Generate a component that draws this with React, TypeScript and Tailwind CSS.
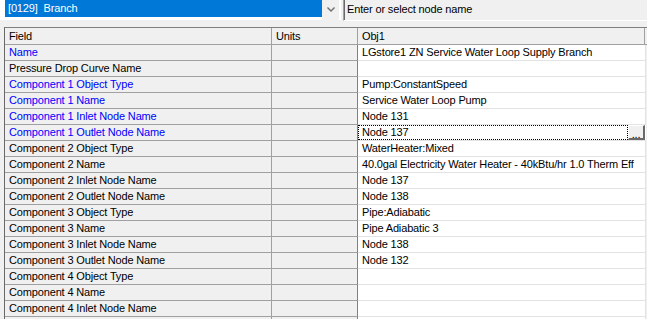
type Row = {
  field: string;
  value: string;
  blue?: boolean;
  focused?: boolean;
};

const rows: Row[] = [
  { field: "Name", value: "LGstore1 ZN Service Water Loop Supply Branch", blue: true },
  { field: "Pressure Drop Curve Name", value: "" },
  { field: "Component 1 Object Type", value: "Pump:ConstantSpeed", blue: true },
  { field: "Component 1 Name", value: "Service Water Loop Pump", blue: true },
  { field: "Component 1 Inlet Node Name", value: "Node 131", blue: true },
  { field: "Component 1 Outlet Node Name", value: "Node 137", blue: true, focused: true },
  { field: "Component 2 Object Type", value: "WaterHeater:Mixed" },
  { field: "Component 2 Name", value: "40.0gal Electricity Water Heater - 40kBtu/hr 1.0 Therm Eff" },
  { field: "Component 2 Inlet Node Name", value: "Node 137" },
  { field: "Component 2 Outlet Node Name", value: "Node 138" },
  { field: "Component 3 Object Type", value: "Pipe:Adiabatic" },
  { field: "Component 3 Name", value: "Pipe Adiabatic 3" },
  { field: "Component 3 Inlet Node Name", value: "Node 138" },
  { field: "Component 3 Outlet Node Name", value: "Node 132" },
  { field: "Component 4 Object Type", value: "" },
  { field: "Component 4 Name", value: "" },
  { field: "Component 4 Inlet Node Name", value: "" },
  { field: "", value: "" },
];

const App = () => {
  return (
    <div className="w-[647px] h-[319px] overflow-hidden bg-[#f0f0f0] text-[11px] leading-[15px] tracking-[-0.15px] text-black font-['Liberation_Sans',Arial,sans-serif]">
      {/* top bar */}
      <div className="flex h-[22px]">
        <div className="flex w-[341px] h-[20px] bg-white">
          <div className="ml-[5px] w-[317px] h-[17px] bg-[#0078d7] text-white pl-[3px] leading-[17px] whitespace-pre">
            [0129]  Branch
          </div>
          <div className="w-[17px] h-[20px] bg-[#f0f0f0] flex items-start justify-center pt-[7px]">
            <svg width="8" height="5" viewBox="0 0 8 5">
              <path d="M0.5 0.5 L4 4 L7.5 0.5" stroke="#6d6d6d" strokeWidth="1.4" fill="none" />
            </svg>
          </div>
        </div>
        <div className="ml-[2px] flex-1 h-[21px] border-l border-[#a0a0a0] border-b border-b-white">
          <div className="h-full border-l border-[#696969] pl-[2px] leading-[18px]">
            Enter or select node name
          </div>
        </div>
      </div>

      {/* grid */}
      <div className="mt-[5px] ml-[4px] border-t border-t-[#808080] border-l border-l-[#696969]">
        {/* header */}
        <div className="flex h-[17px] border-b border-[#a0a0a0]">
          <div className="w-[267px] shrink-0 border-r border-[#a0a0a0] pl-[4px] leading-[16px]">Field</div>
          <div className="w-[86px] shrink-0 border-r border-[#a0a0a0] pl-[4px] leading-[16px]">Units</div>
          <div className="w-[287px] shrink-0 border-r border-[#a0a0a0] pl-[4px] leading-[16px]">Obj1</div>
        </div>
        {rows.map((r, i) => (
          <div key={i} className="flex h-[16px]">
            <div
              className={`w-[267px] shrink-0 border-r border-b border-[#a0a0a0] pl-[4px] whitespace-nowrap overflow-hidden ${
                r.blue ? "text-[#0000ff]" : "text-black"
              }`}
            >
              {r.field}
            </div>
            <div className="w-[86px] shrink-0 border-r border-b border-[#a0a0a0] border-r-[#808080]" />
            {r.focused ? (
              <div className="w-[288px] shrink-0 flex bg-white border-b border-[#e3e3e3]">
                <div className="flex-1 border border-dotted border-black pl-[3px] leading-[13px]">{r.value}</div>
                <div className="w-[17px] h-[15px] bg-[#f0f0f0] border-t border-l border-t-white border-l-white border-r-2 border-b-2 border-r-[#696969] border-b-[#696969] flex items-end justify-center leading-[8px] text-[11px] mr-[1px]">
                  ...
                </div>
              </div>
            ) : (
              <div className="w-[288px] shrink-0 bg-white border-r border-b border-[#e3e3e3] pl-[4px] whitespace-nowrap overflow-hidden">
                {r.value}
              </div>
            )}
          </div>
        ))}
      </div>
    </div>
  );
};

export default App;
